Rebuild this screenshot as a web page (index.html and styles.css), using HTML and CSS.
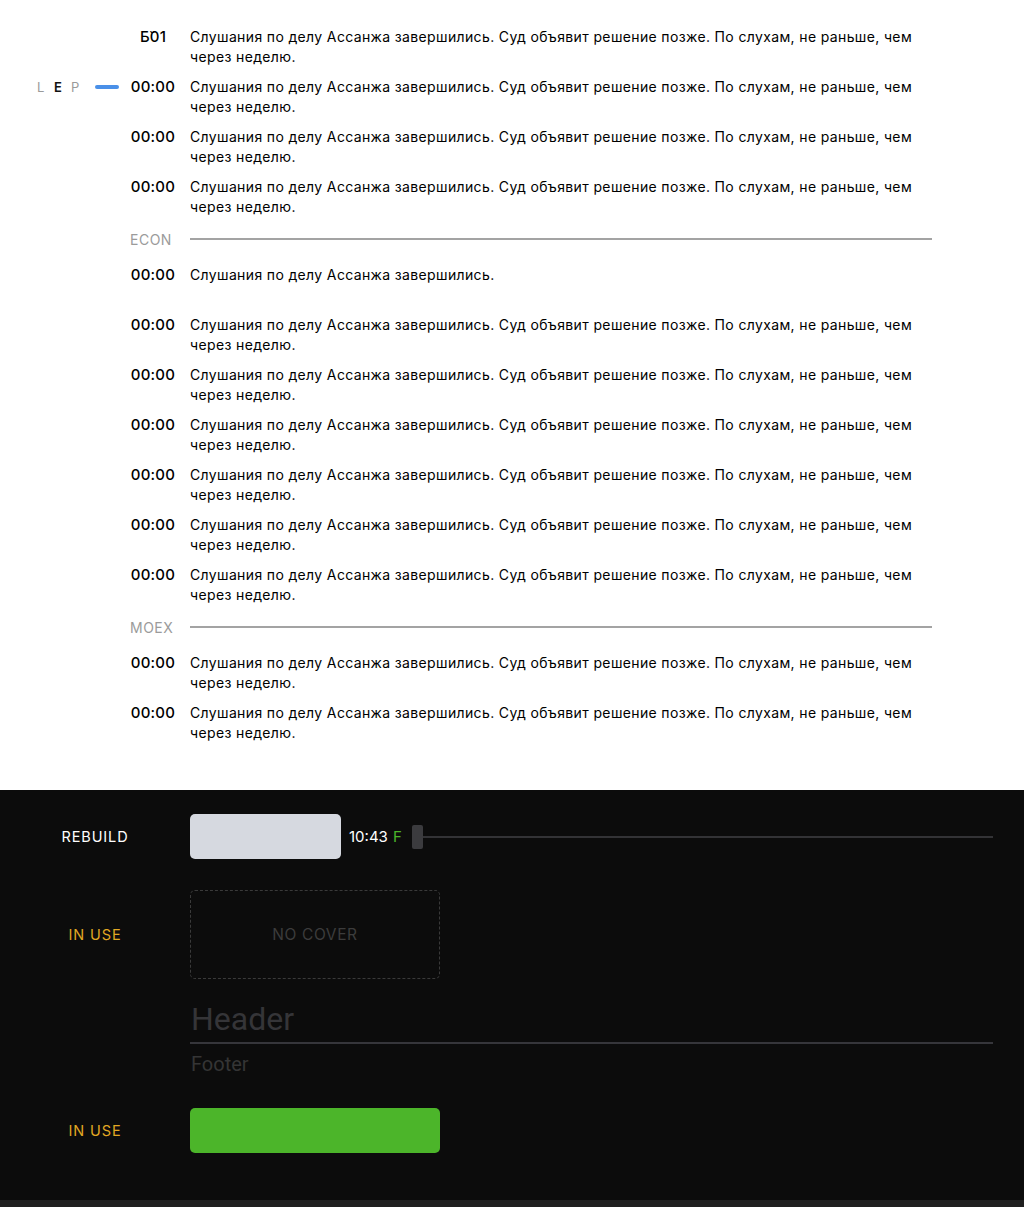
FILE: index.html
```html
<!DOCTYPE html>
<html lang="ru">
<head>
    <meta charset="UTF-8">
    <meta name="viewport" content="width=device-width, initial-scale=1.0">
    <title>Лента</title>
    <link rel="stylesheet" href="styles.css">
</head>
<body>
    <main class="feed">
        <div class="item">
            <div class="mark"></div>
            <div class="time">Б&#x306;01</div>
            <p class="text">Слушания по делу Ассанжа завершились. Суд объявит решение позже. По слухам, не раньше, чем через неделю.</p>
        </div>
        <div class="item">
            <div class="mark">
                <span class="lep"><span>L</span><span class="on">E</span><span>P</span></span>
                <span class="bar"></span>
            </div>
            <div class="time">00:00</div>
            <p class="text">Слушания по делу Ассанжа завершились. Суд объявит решение позже. По слухам, не раньше, чем через неделю.</p>
        </div>
        <div class="item">
            <div class="mark"></div>
            <div class="time">00:00</div>
            <p class="text">Слушания по делу Ассанжа завершились. Суд объявит решение позже. По слухам, не раньше, чем через неделю.</p>
        </div>
        <div class="item">
            <div class="mark"></div>
            <div class="time">00:00</div>
            <p class="text">Слушания по делу Ассанжа завершились. Суд объявит решение позже. По слухам, не раньше, чем через неделю.</p>
        </div>

        <div class="divider">
            <span class="divider-label">ECON</span>
            <span class="divider-line"></span>
        </div>

        <div class="item">
            <div class="mark"></div>
            <div class="time">00:00</div>
            <p class="text">Слушания по делу Ассанжа завершились.</p>
        </div>
        <div class="item">
            <div class="mark"></div>
            <div class="time">00:00</div>
            <p class="text">Слушания по делу Ассанжа завершились. Суд объявит решение позже. По слухам, не раньше, чем через неделю.</p>
        </div>
        <div class="item">
            <div class="mark"></div>
            <div class="time">00:00</div>
            <p class="text">Слушания по делу Ассанжа завершились. Суд объявит решение позже. По слухам, не раньше, чем через неделю.</p>
        </div>
        <div class="item">
            <div class="mark"></div>
            <div class="time">00:00</div>
            <p class="text">Слушания по делу Ассанжа завершились. Суд объявит решение позже. По слухам, не раньше, чем через неделю.</p>
        </div>
        <div class="item">
            <div class="mark"></div>
            <div class="time">00:00</div>
            <p class="text">Слушания по делу Ассанжа завершились. Суд объявит решение позже. По слухам, не раньше, чем через неделю.</p>
        </div>
        <div class="item">
            <div class="mark"></div>
            <div class="time">00:00</div>
            <p class="text">Слушания по делу Ассанжа завершились. Суд объявит решение позже. По слухам, не раньше, чем через неделю.</p>
        </div>
        <div class="item">
            <div class="mark"></div>
            <div class="time">00:00</div>
            <p class="text">Слушания по делу Ассанжа завершились. Суд объявит решение позже. По слухам, не раньше, чем через неделю.</p>
        </div>

        <div class="divider">
            <span class="divider-label">MOEX</span>
            <span class="divider-line"></span>
        </div>

        <div class="item">
            <div class="mark"></div>
            <div class="time">00:00</div>
            <p class="text">Слушания по делу Ассанжа завершились. Суд объявит решение позже. По слухам, не раньше, чем через неделю.</p>
        </div>
        <div class="item">
            <div class="mark"></div>
            <div class="time">00:00</div>
            <p class="text">Слушания по делу Ассанжа завершились. Суд объявит решение позже. По слухам, не раньше, чем через неделю.</p>
        </div>
    </main>

    <section class="panel">
        <div class="prow prow-player">
            <div class="plabel">REBUILD</div>
            <div class="player">
                <div class="thumb"></div>
                <span class="clock">10:43 <b>F</b></span>
                <div class="track">
                    <span class="handle"></span>
                    <span class="line"></span>
                </div>
            </div>
        </div>

        <div class="prow prow-cover">
            <div class="plabel use">IN USE</div>
            <div class="cover">NO COVER</div>
        </div>

        <div class="titles">
            <div class="title-head">Header</div>
            <div class="title-foot">Footer</div>
        </div>

        <div class="prow prow-go">
            <div class="plabel use">IN USE</div>
            <div class="go"></div>
        </div>
    </section>
</body>
</html>
```

FILE: styles.css
```css
*{
    margin:0;
    padding:0;
    box-sizing:border-box;
}
body{
    background-color:#1f1f1f;
    font-family:'Inter', 'Noto Sans', sans-serif;
}

/* feed */
.feed{
    background-color:#fff;
    padding-top:27px;
    padding-bottom:37px;
}
.item{
    display:grid;
    grid-template-columns:130px 46px 742px;
    min-height:40px;
    margin-bottom:10px;
    font-size:14px;
    line-height:20px;
    color:#000;
}
.mark{
    display:flex;
    align-items:center;
    height:20px;
    padding-left:37px;
}
.lep{
    display:flex;
    gap:9px;
    font-size:13px;
    color:#9a9a9a;
}
.lep span{
    width:8px;
}
.lep .on{
    color:#111;
    font-weight:600;
}
.bar{
    width:24px;
    height:4px;
    border-radius:2px;
    background-color:#4a90e8;
    margin-left:16px;
}
.time{
    text-align:center;
    font-weight:500;
    font-size:15px;
    letter-spacing:0.2px;
    white-space:nowrap;
}
.text{
    padding-left:14px;
    letter-spacing:0.36px;
}

.divider{
    display:grid;
    grid-template-columns:130px 60px 742px;
    align-items:center;
    height:18px;
    margin-top:13px;
    margin-bottom:17px;
}
.divider-label{
    grid-column:2;
    font-size:14px;
    color:#9b9b9b;
    letter-spacing:0.5px;
}
.divider-line{
    grid-column:3;
    height:2px;
    background-color:#a3a3a3;
}

/* dark panel */
.panel{
    background-color:#0c0c0c;
    padding:24px 31px 47px 0;
    font-size:14px;
}
.prow{
    display:grid;
    grid-template-columns:190px 1fr;
    align-items:center;
}
.plabel{
    text-align:center;
    color:#fff;
    font-size:14.5px;
    letter-spacing:0.9px;
}
.plabel.use{
    color:#e2a823;
}
.player{
    display:flex;
    align-items:center;
}
.thumb{
    width:151px;
    height:45px;
    border-radius:5px;
    background-color:#d6d9e0;
}
.clock{
    margin-left:8px;
    color:#fff;
    font-size:15px;
}
.clock b{
    font-weight:400;
    color:#4cb52a;
    margin-left:1px;
}
.track{
    flex:1;
    display:flex;
    align-items:center;
    margin-left:10px;
}
.handle{
    width:11px;
    height:24px;
    border-radius:2px;
    background-color:#3b3b3e;
}
.line{
    flex:1;
    height:2px;
    background-color:#333336;
}

.prow-cover{
    margin-top:31px;
}
.cover{
    width:250px;
    height:89px;
    border:1px dashed #3a3a3a;
    border-radius:5px;
    display:flex;
    align-items:center;
    justify-content:center;
    color:#3c3c3c;
    font-size:15.5px;
    letter-spacing:0.6px;
}

.titles{
    margin-left:190px;
    margin-top:22px;
    font-family:'Roboto', sans-serif;
}
.title-head{
    font-size:32px;
    line-height:36px;
    font-weight:400;
    color:#353538;
    padding-left:1px;
    padding-bottom:5px;
    border-bottom:2px solid #36363b;
}
.title-foot{
    margin-top:8px;
    font-size:20px;
    line-height:24px;
    color:#353535;
    padding-left:1px;
}

.prow-go{
    margin-top:32px;
}
.go{
    width:250px;
    height:45px;
    border-radius:5px;
    background-color:#4cb52a;
}
```
